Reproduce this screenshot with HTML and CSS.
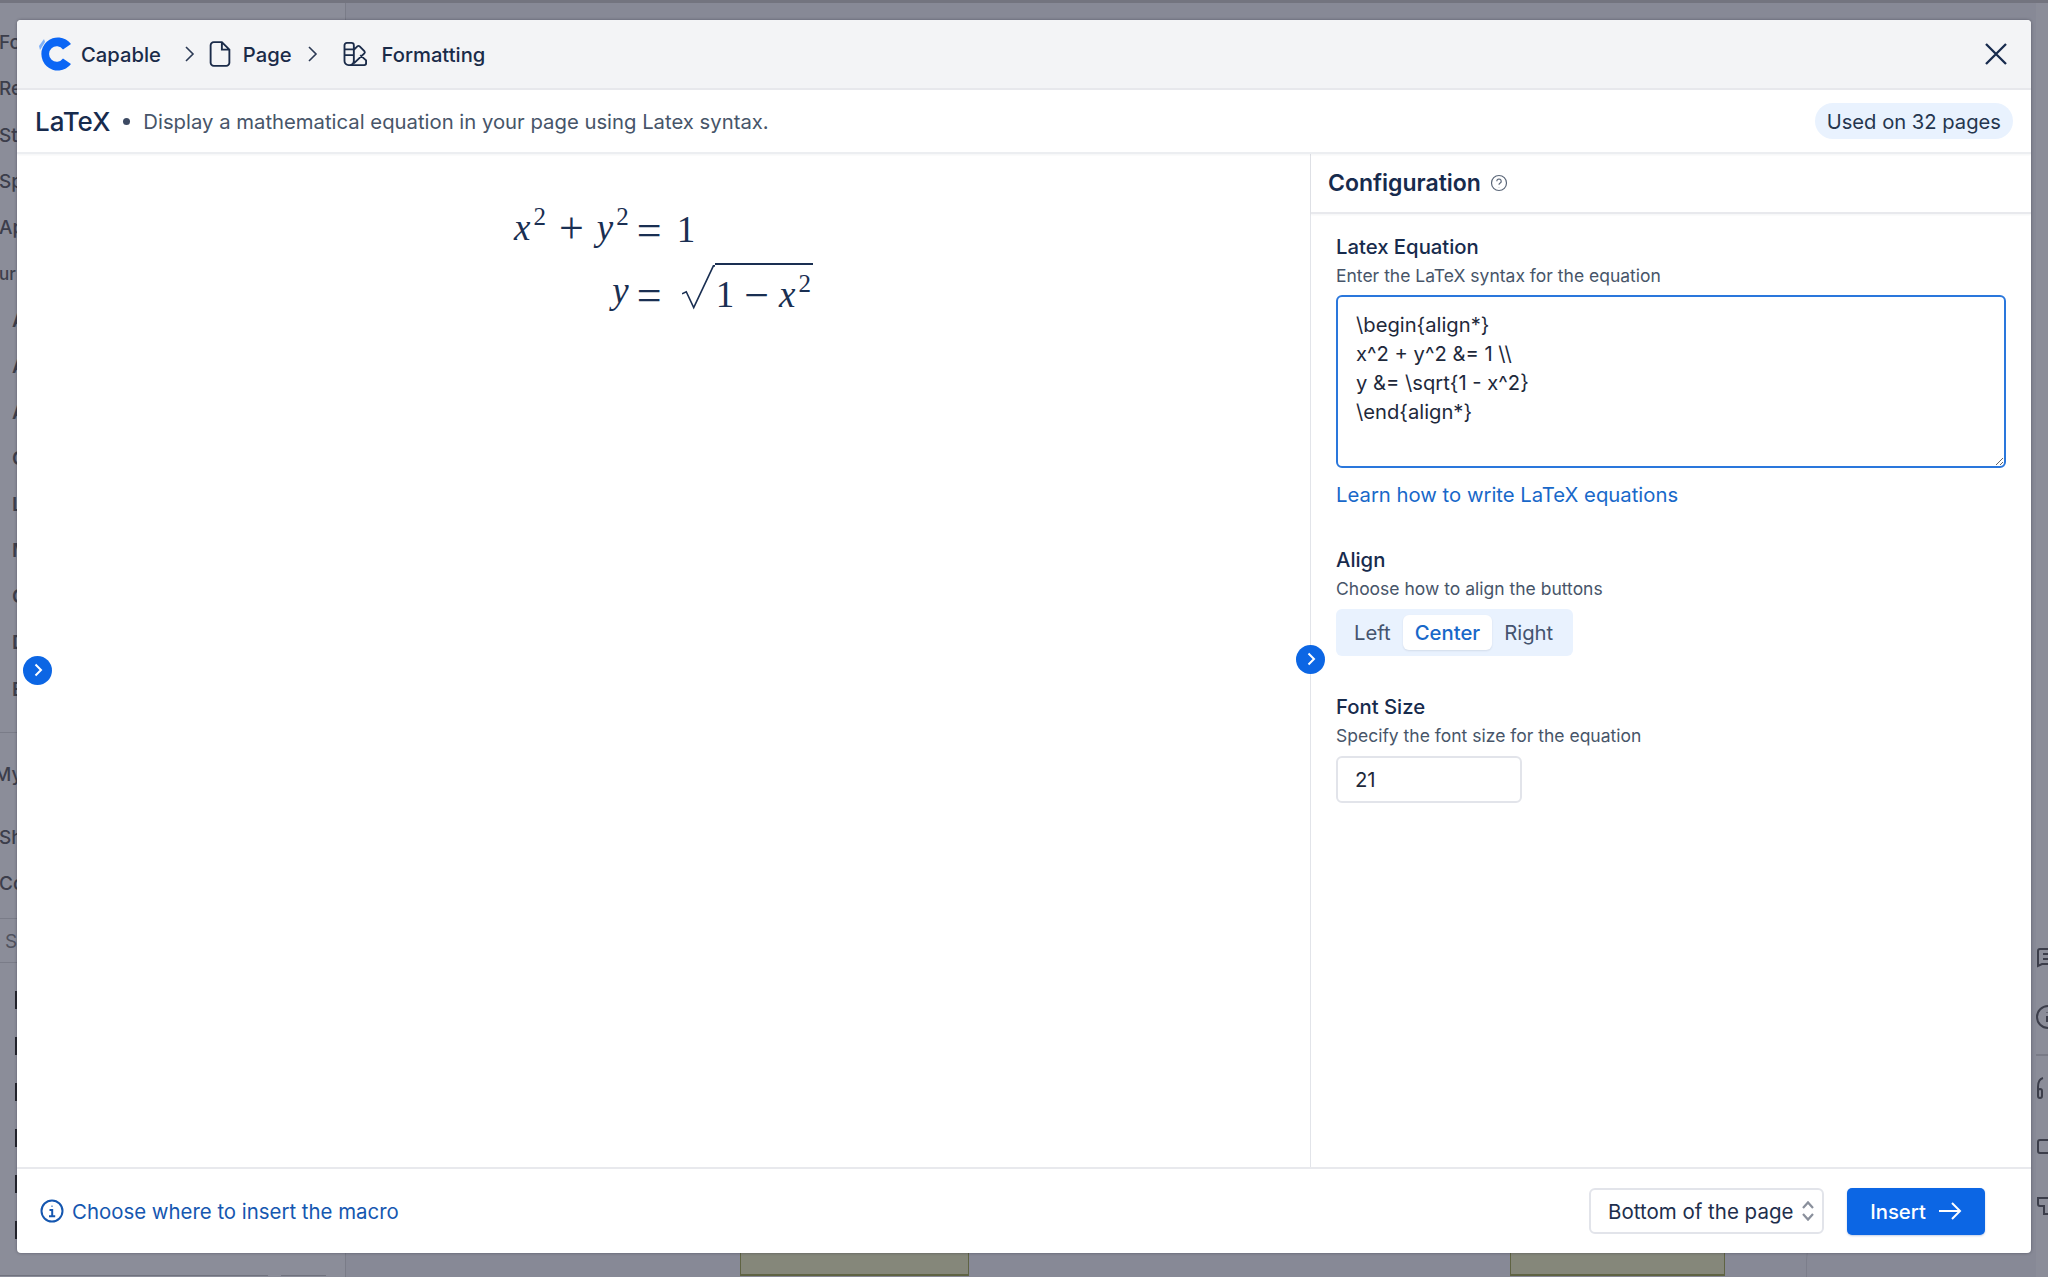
FILE: index.html
```html
<!DOCTYPE html>
<html lang="en">
<head>
<meta charset="utf-8">
<title>LaTeX macro</title>
<link rel="stylesheet" href="styles.css">
</head>
<body>
<div class="page">
  <aside class="side">
    <ul class="nav nav-top">
      <li>Fo</li><li>Re</li><li>Sta</li><li>Sp</li><li>Ap</li><li class="nav-head">ur</li>
    </ul>
    <ul class="nav nav-sub">
      <li>A</li><li>A</li><li>A</li><li>C</li><li>L</li><li>M</li><li>C</li><li>D</li><li>E</li>
    </ul>
    <ul class="nav nav-own">
      <li>My</li><li>Sh</li><li>Co</li>
    </ul>
    <div class="side-search">S</div>
    <div class="dashes"><i></i><i></i><i></i><i></i><i></i><i></i></div>
    <div class="side-foot"><span class="foot-a"></span><span class="foot-b"></span></div>
  </aside>
  <main class="canvas">
    <div class="canvas-foot">
      <span class="olive"></span>
      <span class="olive olive-b"></span>
      <span class="arc"></span>
    </div>
  </main>
  <div class="rail">
    <svg class="rail-icon" viewBox="0 0 24 24"><path d="M2 20V5a2 2 0 0 1 2-2h16a2 2 0 0 1 2 2v11a2 2 0 0 1-2 2H6zM7 8h10M7 13h10"/></svg>
    <svg class="rail-icon" viewBox="0 0 24 24"><circle cx="12" cy="12" r="11"/><path d="M11 11v6M11 7v.5"/></svg>
    <span class="rail-line"></span>
    <svg class="rail-icon" viewBox="0 0 24 24"><path d="M7 2C3 3 2 7 2 11v9a2 2 0 0 0 4 0v-5a2 2 0 0 0-4 0"/></svg>
    <svg class="rail-icon" viewBox="0 0 24 24"><rect x="2" y="5" width="24" height="13" rx="2"/></svg>
    <svg class="rail-icon" viewBox="0 0 24 24"><path d="M2 4h20v8h-8v8h-6v-8H4a2 2 0 0 1-2-2z"/></svg>
  </div>
</div>

<section class="modal">
  <header class="crumbs">
    <svg class="logo" viewBox="0 0 34 34"><path class="logo-main" d="M33 7 A16.5 16.5 0 1 0 33 27 L25 21.5 A7.7 7.7 0 1 1 25 12.5 Z"/><path class="logo-tab" d="M1 9 L6 2 L7 5 L2 13Z"/></svg>
    <span class="crumb">Capable</span>
    <svg class="chev chev-a" viewBox="0 0 12 20"><path d="M2 3l7 7-7 7"/></svg>
    <svg class="crumb-icon" viewBox="0 0 24 24"><path d="M7 2.500h6.500L19.500 8.500V19a2.500 2.500 0 0 1-2.500 2.500H7A2.500 2.500 0 0 1 4.500 19V5A2.500 2.500 0 0 1 7 2.500zM13.500 2.500V8.500H19.500"/></svg>
    <span class="crumb">Page</span>
    <svg class="chev chev-b" viewBox="0 0 12 20"><path d="M2 3l7 7-7 7"/></svg>
    <svg class="crumb-icon crumb-icon-b" viewBox="0 0 24 24"><path d="M6.500 21.500A3.500 3.500 0 0 1 3 18V4.500A2 2 0 0 1 5 2.500h4a2 2 0 0 1 2 2V18a3.500 3.500 0 0 1-3.500 3.500zm0 0H20a1.500 1.500 0 0 0 1.500-1.500v-2.500L16.500 13M11 8.500l3-3a1.500 1.500 0 0 1 2 0l4 4a1.500 1.500 0 0 1 0 2L11 20M3 8h8M3 13h8M7 17.500h.01"/></svg>
    <span class="crumb">Formatting</span>
    <svg class="close" viewBox="0 0 24 24"><path d="M2 2l20 20M22 2L2 22"/></svg>
  </header>

  <div class="intro">
    <h1 class="title">LaTeX</h1>
    <span class="dot"></span>
    <p class="lede">Display a mathematical equation in your page using Latex syntax.</p>
    <span class="pill">Used on 32 pages</span>
  </div>

  <div class="stage">
    <div class="preview">
      <div class="math">
        <div class="lhs"><i>x</i><sup>2</sup><span class="op">+</span><i>y</i><sup>2</sup></div>
        <div class="rhs"><span class="op op-eq">=</span><span>1</span></div>
        <div class="lhs"><i>y</i></div>
        <div class="rhs"><span class="op op-eq">=</span>
          <svg class="radical" viewBox="0 0 31 43"><path d="M0 27l4-2 7 15L29.500 .7H31"/></svg>
          <span class="radicand">1<span class="op op-minus">−</span><i>x</i><sup>2</sup></span>
        </div>
      </div>
    </div>

    <aside class="config">
      <div class="config-head">
        <h2>Configuration</h2>
        <svg class="help" viewBox="0 0 18 18"><circle cx="9" cy="9" r="7.500"/><path d="M6.800 7.200a2.200 2.200 0 1 1 3.400 1.900c-.8.500-1.200.9-1.200 1.700M9 13v.3"/></svg>
      </div>
      <div class="config-body">
        <div class="field">
          <label class="label" for="eq">Latex Equation</label>
          <p class="desc">Enter the LaTeX syntax for the equation</p>
          <textarea id="eq" class="eq" readonly>\begin{align*}
x^2 + y^2 &amp;= 1 \\
y &amp;= \sqrt{1 - x^2}
\end{align*}</textarea>
          <a class="learn" href="#">Learn how to write LaTeX equations</a>
        </div>
        <div class="field">
          <span class="label">Align</span>
          <p class="desc">Choose how to align the buttons</p>
          <div class="seg">
            <span class="seg-item">Left</span>
            <span class="seg-item seg-on">Center</span>
            <span class="seg-item">Right</span>
          </div>
        </div>
        <div class="field">
          <label class="label" for="fs">Font Size</label>
          <p class="desc">Specify the font size for the equation</p>
          <input id="fs" class="num" type="text" value="21" readonly>
        </div>
      </div>
    </aside>

    <button class="toggle toggle-left" type="button" aria-label="Expand"><svg viewBox="0 0 12 16"><path d="M3.500 2.500L9 8l-5.500 5.500"/></svg></button>
    <button class="toggle toggle-mid" type="button" aria-label="Collapse"><svg viewBox="0 0 12 16"><path d="M3.500 2.500L9 8l-5.500 5.500"/></svg></button>
  </div>

  <footer class="foot">
    <svg class="info" viewBox="0 0 24 24"><circle cx="12" cy="12" r="10.500"/><path class="info-i" d="M12 6.800v.8M9.500 11H12.200v6M9 17.200h6.200"/></svg>
    <a class="where" href="#">Choose where to insert the macro</a>
    <div class="select">
      <span>Bottom of the page</span>
      <svg class="updown" viewBox="0 0 14 24"><path d="M2 9l5-5.500L12 9M2 15l5 5.500L12 15"/></svg>
    </div>
    <button class="insert" type="button">Insert
      <svg viewBox="0 0 24 20"><path d="M1 10h21M14 2l8 8-8 8"/></svg>
    </button>
  </footer>
</section>
</body>
</html>
```
FILE: styles.css
```css
* { box-sizing: border-box; }
html, body { margin: 0; height: 100%; }
body {
  width: 2048px;
  height: 1277px;
  overflow: hidden;
  position: relative;
  font-family: Inter, "Liberation Sans", sans-serif;
  color: #172b4d;
  background: #8b8d99;
}
h1, h2, p, ul { margin: 0; padding: 0; }
ul { list-style: none; }

/* dimmed page behind the dialog */
.page {
  display: flex;
  height: 1277px;
  border-top: 3px solid #73747f;
  background: #8b8d99;
}
.side {
  width: 346px;
  flex: none;
  border-right: 1px solid #7a7c88;
  overflow: hidden;
  display: flex;
  flex-direction: column;
  color: #3c3e4b;
  font-size: 19px;
  font-weight: 500;
  line-height: 46px;
  padding-top: 17px;
}
.nav-top { margin-left: -1px; }
.nav-top li { height: 46.3px; }
.nav-head { font-size: 17px; }
.nav-sub { margin-left: 12px; font-weight: 600; }
.nav-sub li { height: 46.1px; }
.nav-own {
  margin-left: -1px;
  margin-top: 19px;
  padding-top: 19px;
  border-top: 1px solid #7a7c88;
}
.nav-own li:first-child { height: 63px; margin-left: -5px; }
.nav-own li { height: 46px; }
.side-search {
  margin-top: 11px;
  height: 45px;
  padding-left: 5px;
  line-height: 45px;
  border-top: 1px solid #7a7c88;
  border-bottom: 1px solid #7a7c88;
  color: #50525e;
  font-weight: 400;
}
.dashes {
  margin-left: 15px;
  padding-top: 28px;
  display: flex;
  flex-direction: column;
  gap: 28px;
}
.dashes i { display: block; width: 2px; height: 18px; background: #23242b; }
.side-foot {
  margin-top: auto;
  display: flex;
  height: 2px;
  gap: 13px;
}
.foot-a { width: 268px; border-top: 1px solid #70727e; }
.foot-b { width: 45px; border-top: 1px solid #70727e; }

.canvas {
  flex: 1;
  display: flex;
  flex-direction: column;
  justify-content: flex-end;
  background: #878996;
}
.canvas-foot {
  display: flex;
  padding: 0 0 1px 394px;
  height: 80px;
  position: relative;
}
.olive {
  width: 229px;
  background: #85877a;
  border: 1px solid #5f6343;
  border-bottom-width: 2px;
}
.olive-b { width: 215px; margin-left: 541px; }
.arc {
  width: 120px;
  height: 60px;
  margin-left: 81px;
  margin-top: 23px;
  border: 1px solid #7c7e8b;
  border-radius: 40px 0 0 0;
  border-width: 1px 0 0 1px;
}
.rail {
  width: 12px;
  flex: none;
  overflow: hidden;
  padding-top: 943px;
  display: flex;
  flex-direction: column;
  align-items: flex-start;
}
.rail-icon {
  width: 24px;
  height: 24px;
  flex: none;
  margin-bottom: 35px;
  fill: none;
  stroke: #3c3e4b;
  stroke-width: 2;
}
.rail-line {
  display: block;
  width: 12px;
  height: 2px;
  background: #797b87;
  margin: -10px 0 20px;
  flex: none;
}

/* dialog */
.modal {
  position: absolute;
  left: 17px;
  top: 20px;
  width: 2014px;
  height: 1233px;
  background: #fff;
  border-radius: 4px;
  display: flex;
  flex-direction: column;
  overflow: hidden;
  box-shadow: 0 0 3px rgba(30, 32, 45, .45);
}
.crumbs {
  flex: none;
  height: 70px;
  display: flex;
  align-items: center;
  padding: 0 23px 0 21px;
  background: #f3f4f6;
  border-bottom: 2px solid #e7e8ec;
  font-size: 20.200px;
  font-weight: 500;
  color: #1a2b49;
}
.logo { width: 34px; height: 34px; flex: none; margin-right: 9px; }
.logo-main { fill: #0b66f5; }
.logo-tab { fill: #7eb0f7; }
.chev {
  width: 12px;
  height: 20px;
  flex: none;
  fill: none;
  stroke: #2c3a55;
  stroke-width: 1.6;
}
.chev-a { margin: 0 9px 0 23px; }
.chev-b { margin: 0 22px 0 15px; }
.crumb-icon {
  width: 30px;
  height: 30px;
  flex: none;
  margin-right: 8px;
  fill: none;
  stroke: #1a2b49;
  stroke-width: 1.500;
}
.crumb-icon-b { width: 28px; height: 28px; margin: 0 13px 0 0; stroke-width: 1.600; }
.close {
  width: 24px;
  height: 24px;
  margin-left: auto;
  fill: none;
  stroke: #172b4d;
  stroke-width: 2.300;
}
.intro {
  flex: none;
  height: 64px;
  display: flex;
  align-items: center;
  padding: 0 18px 0 18px;
  border-bottom: 2px solid #eceef1;
  box-shadow: 0 1px 2px rgba(20, 30, 60, .05);
  position: relative;
  z-index: 1;
}
.title { font-size: 26px; font-weight: 500; color: #172b4d; }
.dot { width: 7px; height: 7px; border-radius: 50%; background: #3d4a63; margin: 0 13px 0 13px; }
.lede { font-size: 20.300px; color: #475569; }
.pill {
  margin-left: auto;
  height: 36px;
  padding: 0 12px;
  display: flex;
  align-items: center;
  border-radius: 18px;
  background: #e9f2fe;
  font-size: 20.200px;
  color: #25364f;
}

.stage { flex: 1; display: flex; position: relative; min-height: 0; }
.preview { flex: 1; padding-top: 42px; border-right: 1px solid #e2e4e9; }
.math {
  display: grid;
  grid-template-columns: auto auto;
  grid-auto-rows: 63px;
  justify-content: center;
  font-family: "Liberation Serif", serif;
  font-size: 37px;
  line-height: 63px;
  color: #1a2f52;
}
.lhs { text-align: right; white-space: nowrap; }
.rhs { display: flex; align-items: baseline; white-space: nowrap; }
.math sup { font-size: 25px; line-height: 0; vertical-align: 15px; margin-left: 3px; }
.op { display: inline-block; margin: 0 13px; font-size: 44px; line-height: 1; transform: translateY(3px); }
.op-eq { margin-left: 8px; margin-right: 15px; line-height: 63px; }
.op-minus { margin: 0 10px; }
.radical {
  width: 33px;
  height: 46px;
  flex: none;
  align-self: flex-start;
  margin-top: 6px;
  margin-left: 5px;
  fill: none;
  stroke: #1a2f52;
  stroke-width: 1.500;
}
.radicand {
  border-top: 2px solid #1a2f52;
  margin-top: 4px;
  padding: 6px 2px 0 1px;
  line-height: 38px;
}

.config { width: 720px; flex: none; display: flex; flex-direction: column; }
.config-head {
  flex: none;
  height: 60px;
  display: flex;
  align-items: center;
  padding-left: 17px;
  border-bottom: 2px solid #e8e9ed;
  box-shadow: 0 1px 2px rgba(20, 30, 60, .05);
}
.config-head h2 { font-size: 23px; font-weight: 600; color: #172b4d; }
.help { width: 18px; height: 18px; margin-left: 9px; fill: none; stroke: #5a6678; stroke-width: 1.200; }
.config-body { padding: 18px 25px 0 25px; }
.field { margin-bottom: 36px; display: flex; flex-direction: column; align-items: flex-start; }
.label { font-size: 20.300px; line-height: 29px; font-weight: 500; color: #172b4d; }
.desc { font-size: 17.500px; line-height: 26px; margin: 2px 0 7.500px; color: #475569; }
.eq {
  display: block;
  width: 670px;
  height: 173px;
  margin-top: -1.500px;
  padding: 12.500px 18px;
  border: 2px solid #2a77dc;
  border-radius: 6px;
  outline: none;
  font: 400 20.200px/29px Inter, "Liberation Sans", sans-serif;
  color: #1e293b;
  background: #fff;
  resize: vertical;
}
.learn { margin-top: 12px; font-size: 20.300px; line-height: 29px; color: #1868c9; text-decoration: none; }
.seg {
  display: flex;
  align-items: center;
  height: 47px;
  margin-top: -1px;
  padding: 0 8px 0 6px;
  border-radius: 6px;
  background: #e9f2fe;
  font-size: 20.300px;
  color: #44546f;
}
.seg-item { padding: 0 12px; line-height: 35px; }
.seg-on {
  background: #fff;
  border-radius: 6px;
  color: #1868c9;
  font-weight: 500;
  box-shadow: 0 1px 2px rgba(20, 30, 60, .1);
}
.num {
  width: 186px;
  height: 47px;
  padding: 0 17px;
  border: 2px solid #e2e4ea;
  border-radius: 6px;
  outline: none;
  font: 400 20.300px Inter, "Liberation Sans", sans-serif;
  color: #1e293b;
  background: #fff;
}

.toggle {
  position: absolute;
  top: 50%;
  width: 29px;
  height: 29px;
  margin-top: -16px;
  padding: 0;
  border: 0;
  border-radius: 50%;
  background: #0c66e4;
  display: flex;
  align-items: center;
  justify-content: center;
}
.toggle svg { width: 12px; height: 16px; fill: none; stroke: #fff; stroke-width: 2; }
.toggle-left { left: 6px; transform: translateY(11px); }
.toggle-mid { left: 1279px; }

.foot {
  flex: none;
  height: 86px;
  display: flex;
  align-items: center;
  padding: 0 46px 0 23px;
  border-top: 2px solid #e8e9ed;
}
.info { width: 24px; height: 24px; flex: none; margin-right: 8px; fill: none; stroke: #1557b0; stroke-width: 2; }
.where { font-size: 20.400px; color: #1557b0; text-decoration: none; }
.select {
  margin-left: auto;
  width: 235px;
  height: 46px;
  padding: 0 7px 0 17px;
  display: flex;
  align-items: center;
  justify-content: space-between;
  border: 2px solid #e2e4ea;
  border-radius: 6px;
  font-size: 20.500px;
  color: #1e2f4d;
}
.updown { width: 14px; height: 24px; fill: none; stroke: #8a909c; stroke-width: 2.200; }
.insert {
  margin-left: 23px;
  width: 138px;
  height: 47px;
  border: 0;
  border-radius: 5px;
  background: #0c66e4;
  color: #fff;
  font: 500 20.300px Inter, "Liberation Sans", sans-serif;
  display: flex;
  align-items: center;
  justify-content: center;
  gap: 12px;
  box-shadow: 0 1px 2px rgba(12, 60, 150, .25);
}
.insert svg { width: 24px; height: 20px; fill: none; stroke: #fff; stroke-width: 2; }
```
